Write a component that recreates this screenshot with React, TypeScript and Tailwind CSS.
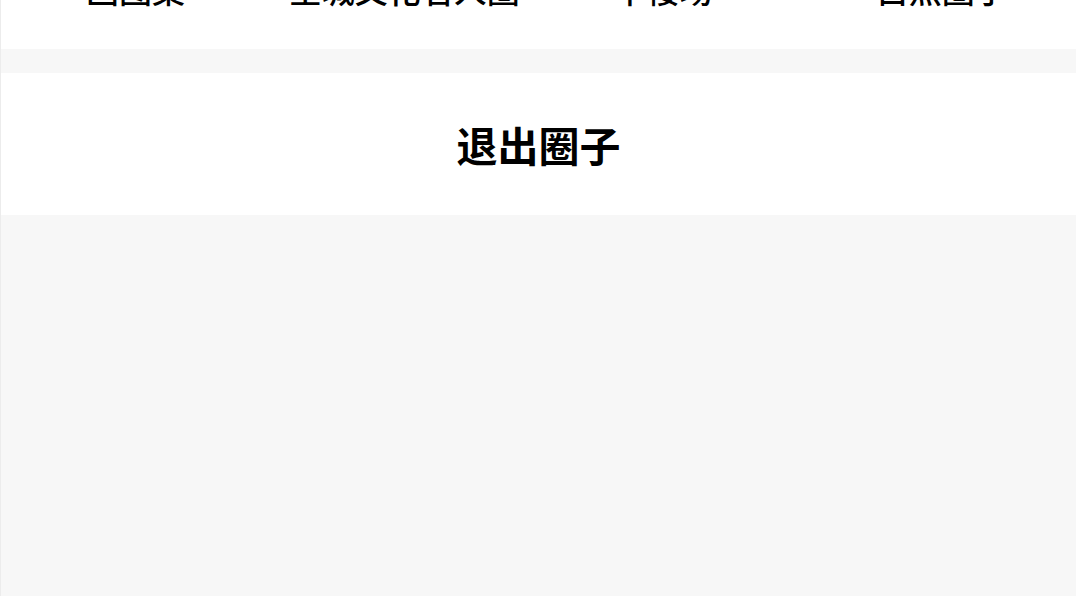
const tabs = ['画图集', '全城文化名人圈', '半楼场', '自然圈子'];

export default function App() {
  return (
    <div
      className="flex h-[596px] flex-col overflow-hidden border-l border-[#ececec] bg-[#f7f7f7] text-black"
      style={{ fontFamily: '"Noto Sans CJK SC", "Noto Sans", sans-serif' }}
    >
      <div className="h-[49px] shrink-0 overflow-hidden bg-white">
        <div className="-mt-[27px] grid grid-cols-4 text-center text-[33px] font-medium leading-[33px]">
          {tabs.map((t, i) => (
            <span key={t} className={i === 2 ? 'pr-5' : ''}>
              {t}
            </span>
          ))}
        </div>
      </div>
      <div className="mt-6 flex h-[142px] shrink-0 items-center justify-center bg-white">
        <span className="text-[41px] font-bold leading-none">退出圈子</span>
      </div>
    </div>
  );
}
